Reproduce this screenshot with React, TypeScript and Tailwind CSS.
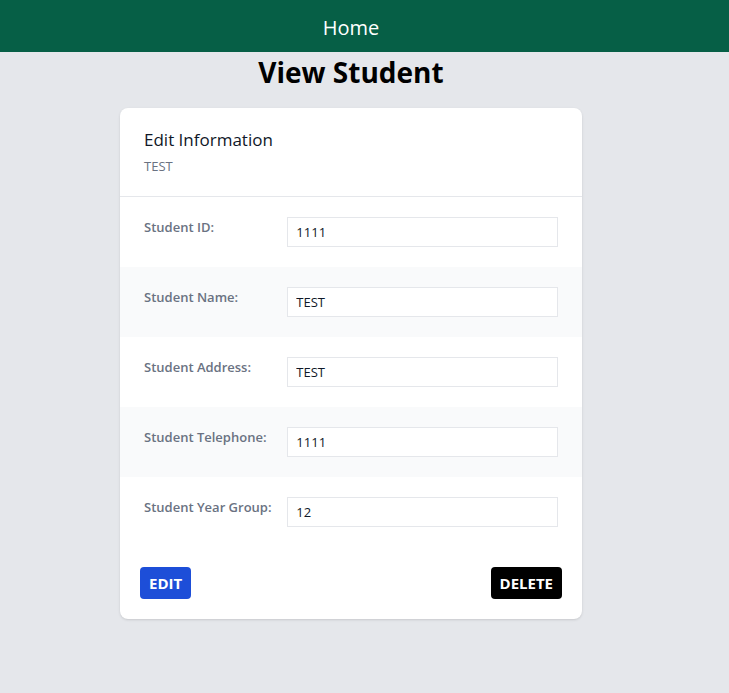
const fields = [
  { label: "Student ID:", value: "1111" },
  { label: "Student Name:", value: "TEST" },
  { label: "Student Address:", value: "TEST" },
  { label: "Student Telephone:", value: "1111" },
  { label: "Student Year Group:", value: "12" },
];

export default function App() {
  return (
    <div className="min-h-[693px] bg-gray-200 font-['Open_Sans',sans-serif]">
      <nav className="h-[52px] bg-[#065f46]">
        <div className="flex h-full w-[702px] items-center justify-center pt-[3px] text-xl text-white">
          Home
        </div>
      </nav>

      <div className="w-[702px] pb-10">
        <h1 className="mt-[2px] text-center text-[28px] font-bold leading-9 text-black">View Student</h1>

        <div className="mx-auto mt-[18px] w-[462px] overflow-hidden rounded-lg bg-white shadow">
          <div className="border-b border-gray-200 px-6 pb-5 pt-[18px]">
            <h3 className="text-[17px] font-medium leading-7 text-gray-900">Edit Information</h3>
            <p className="mt-[2px] text-[13px] leading-5 text-gray-500">TEST</p>
          </div>

          <dl>
            {fields.map((f, i) => (
              <div
                key={f.label}
                className={`grid grid-cols-3 gap-4 px-6 py-5 ${i % 2 === 1 ? "bg-gray-50" : "bg-white"}`}
              >
                <dt className="whitespace-nowrap text-[13px] font-semibold leading-5 text-gray-500">{f.label}</dt>
                <dd className="col-span-2">
                  <input
                    defaultValue={f.value}
                    className="h-[30px] w-full border border-gray-200 bg-white px-2 text-[13px] text-gray-900 outline-none"
                  />
                </dd>
              </div>
            ))}
          </dl>

          <div className="flex items-center justify-between px-5 pb-5 pt-5">
            <button className="h-8 rounded bg-[#1d4ed8] px-[9px] text-[15px] font-bold text-white">EDIT</button>
            <button className="h-8 rounded bg-black px-[9px] text-[15px] font-bold text-white">DELETE</button>
          </div>
        </div>
      </div>
    </div>
  );
}
